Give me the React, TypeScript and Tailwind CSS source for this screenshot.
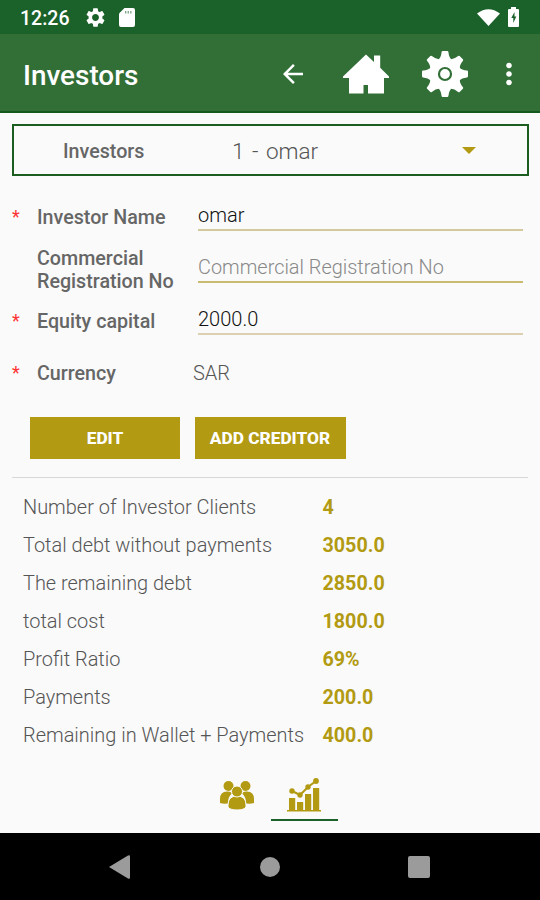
import { ReactNode } from "react";
import { MdArrowBack, MdMoreVert, MdSettings } from "react-icons/md";

const stats = [
  { label: "Number of Investor Clients", value: "4" },
  { label: "Total debt without payments", value: "3050.0" },
  { label: "The remaining debt", value: "2850.0" },
  { label: "total cost", value: "1800.0" },
  { label: "Profit Ratio", value: "69%" },
  { label: "Payments", value: "200.0" },
  { label: "Remaining in Wallet + Payments", value: "400.0" },
];

const HomeIcon = () => (
  <svg width="46" height="40" viewBox="0 0 46 40" fill="#fff">
    <path d="M23 .5 31 8V1.500h6.200v12.200L46 22.500v1.500h-5v15.500H25v-8.500h-4.500v8.500H6V24H0v-1.500z" />
  </svg>
);

const teeth = [0, 45, 90, 135, 180, 225, 270, 315];

const GearIcon = () => (
  <svg width="46" height="46" viewBox="0 0 46 46">
    <g fill="#fff">
      {teeth.map((angle) => (
        <path
          key={angle}
          d="M16.500 8.500Q19 6.500 19.600 1q.1-1 1.100-1h4.600q1 0 1.100 1 .6 5.500 3.100 7.500z"
          transform={`rotate(${angle} 23 23)`}
        />
      ))}
      <circle cx="23" cy="23" r="16" />
    </g>
    <circle cx="23" cy="23" r="6" fill="#fff" stroke="#316f37" strokeWidth="2.200" />
  </svg>
);

const SdCardIcon = () => (
  <svg width="16" height="19" viewBox="0 0 16 19">
    <path d="M5.500 0H14q2 0 2 2v15q0 2-2 2H2q-2 0-2-2V5.500z" fill="#fff" />
    <path d="M6 3h1.300v2.500H6zM8.600 3h1.300v2.500H8.600zM11.200 3h1.300v2.500h-1.300z" fill="#7aa384" />
  </svg>
);

const WifiIcon = () => (
  <svg width="23" height="17" viewBox="0 0 23 17" fill="#fff">
    <path d="M0 4.500Q11.500-4 23 4.500L11.500 17z" />
  </svg>
);

const BatteryIcon = () => (
  <svg width="11" height="20" viewBox="0 0 11 20">
    <path d="M3 0h5v2h2q1 0 1 1v16q0 1-1 1H1q-1 0-1-1V3q0-1 1-1h2z" fill="#fff" />
    <path d="M6.500 5 3.300 11h2v5l3-6.500h-1.800z" fill="#1b612a" />
  </svg>
);

const PeopleIcon = () => (
  <svg width="34" height="30" viewBox="0 0 34 30" fill="#b29a12">
    <circle cx="8.500" cy="5" r="5" />
    <circle cx="25.500" cy="5" r="5" />
    <path d="M0 22v-4Q0 10 8 10.500q3 0 4 2-4 3-4 10Q3 23 0 22zM34 22v-4q0-8-8-7.500-3 0-4 2 4 3 4 10 5 .5 8-.5z" />
    <g stroke="#fafafa" strokeWidth="1">
      <path d="M8 26v-2q0-9 9-9t9 9v2q-2 3-9 3t-9-3z" />
      <circle cx="17" cy="10.500" r="5.500" />
    </g>
  </svg>
);

const ChartIcon = () => (
  <svg width="34" height="34" viewBox="0 0 34 34" fill="#b29a12">
    <path d="M2 20h6.200v12H2zM10 24h6.200v8H10zM18 16h6.200v16H18zM26 10h6.200v22H26zM0 32h34v1.500H0z" />
    <path d="M5 13l8 4 8-8 8-6" fill="none" stroke="#b29a12" strokeWidth="2" />
    <circle cx="5" cy="13" r="2.700" />
    <circle cx="13" cy="17" r="2.700" />
    <circle cx="21" cy="9" r="2.700" />
    <circle cx="29" cy="3" r="2.900" />
  </svg>
);

interface FieldProps {
  label: ReactNode;
  required?: boolean;
  children: ReactNode;
}

const Field = ({ label, required, children }: FieldProps) => (
  <div className="flex h-[52px] items-center pl-3 pr-[17px]">
    <span className="w-[25px] text-[18px] leading-none text-[#f33]">
      {required && "*"}
    </span>
    <span className="w-[161px] whitespace-pre-line pt-px text-[19.700px] font-medium leading-[23px] text-[#666]">
      {label}
    </span>
    {children}
  </div>
);

const App = () => {
  return (
    <div className="flex h-[900px] w-[540px] flex-col overflow-hidden bg-[#fafafa] font-['Roboto',sans-serif]">
      <div className="flex h-[34px] shrink-0 items-center bg-[#1b612a] pl-5 pr-[21px] text-white">
        <span className="w-[64px] pt-[3px] text-[19.500px] font-medium leading-none">12:26</span>
        <MdSettings size={23} />
        <div className="ml-[12px]">
          <SdCardIcon />
        </div>
        <div className="ml-auto flex items-center gap-[8px]">
          <WifiIcon />
          <BatteryIcon />
        </div>
      </div>
      <header className="flex h-[79px] shrink-0 items-center border-b-2 border-[#14591c] bg-[#316f37] pl-[23px] pt-0.5 text-white">
        <h1 className="w-[255px] pt-1 text-[27.900px] font-medium leading-none">Investors</h1>
        <MdArrowBack size={30} />
        <div className="ml-[35px]">
          <HomeIcon />
        </div>
        <div className="ml-[33px]">
          <GearIcon />
        </div>
        <MdMoreVert size={34} className="ml-[24px]" />
      </header>

      <main className="flex flex-1 flex-col">
        <div className="mx-3 mr-[11px] mt-[11px] flex h-[52px] items-center border-2 border-[#1b5e20] pl-[49px]">
          <span className="w-[169px] pt-1 text-[19.700px] font-medium text-[#666]">Investors</span>
          <span className="w-[230px] pt-1 text-[22.500px] font-light text-[#555] [word-spacing:2px]">
            1 - omar
          </span>
          <svg width="14" height="7" viewBox="0 0 14 7" fill="#b29a12">
            <path d="M0 0h14L7 7z" />
          </svg>
        </div>

        <form className="mt-[15px]">
          <Field label="Investor Name" required>
            <div className="mb-0.5 h-[30px] flex-1 border-b-2 border-[#d3c99c] text-[20px] font-light leading-[28px] text-[#111]">
              omar
            </div>
          </Field>
          <Field label={"Commercial\nRegistration No"}>
            <div className="mb-0.5 h-[30px] flex-1 border-b-2 border-[#c9bb70] text-[19.900px] font-light leading-[30px] text-[#888]">
              Commercial Registration No
            </div>
          </Field>
          <Field label="Equity capital" required>
            <div className="mb-0.5 h-[30px] flex-1 border-b-2 border-[#dcd0b0] text-[20px] font-light leading-[28px] text-[#111]">
              2000.0
            </div>
          </Field>
          <Field label="Currency" required>
            <span className="-ml-[5px] text-[20px] font-light text-[#555]">SAR</span>
          </Field>
        </form>

        <div className="ml-[30px] mt-[18px] flex gap-[14.500px] text-[17.300px] font-extrabold text-white">
          <button className="h-[42px] w-[150px] bg-[#b29a12] pt-0.5">EDIT</button>
          <button className="h-[42px] w-[151px] bg-[#b29a12] pt-0.5">ADD CREDITOR</button>
        </div>

        <div className="mx-3 mt-[18px] h-px bg-[#d8d8d8]" />

        <dl className="mt-[10px] pl-[23px]">
          {stats.map(({ label, value }) => (
            <div key={label} className="flex h-[38px] items-center pt-0.5 text-[19.950px]">
              <dt className="w-[299.500px] whitespace-nowrap font-light text-[#555]">{label}</dt>
              <dd className="text-[19.700px] font-bold text-[#b29a12]">{value}</dd>
            </div>
          ))}
        </dl>

        <div className="mt-[18px] flex justify-center pl-px">
          <div className="flex h-[49px] w-[67px] justify-center pt-[9px]">
            <PeopleIcon />
          </div>
          <div className="flex h-[49px] w-[67px] justify-center border-b-2 border-[#1b612a] pt-[6px]">
            <ChartIcon />
          </div>
        </div>
      </main>

      <nav className="flex h-[67px] shrink-0 items-center bg-black pl-[109px]">
        <svg width="21" height="24" viewBox="0 0 21 24" fill="#9b9b9b">
          <path d="M0 12 19 .5q2-1 2 1v21q0 2-2 1z" />
        </svg>
        <div className="ml-[130px] size-5 rounded-full bg-[#9b9b9b]" />
        <div className="ml-[128px] size-[22px] rounded-[2px] bg-[#9b9b9b]" />
      </nav>
    </div>
  );
};

export default App;
